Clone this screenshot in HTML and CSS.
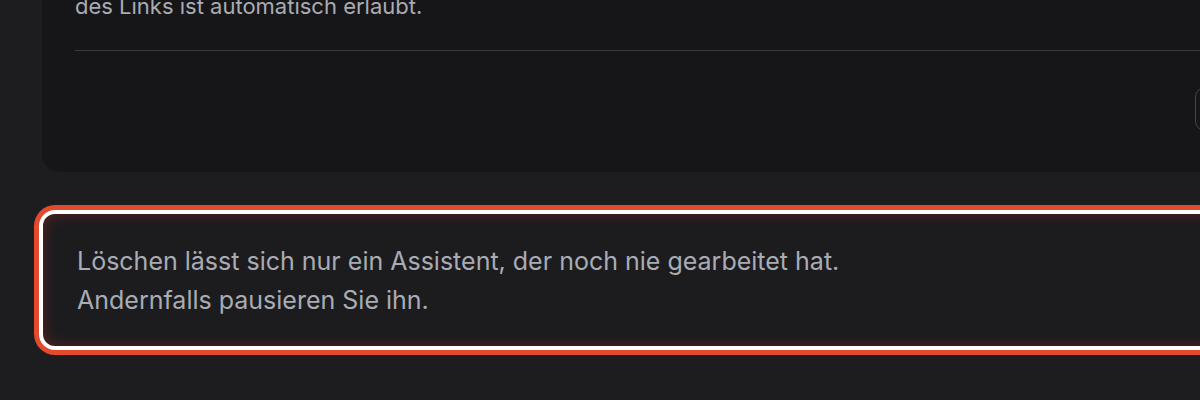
FILE: index.html
```html
<!DOCTYPE html>
<html lang="de">
<head>
<meta charset="utf-8">
<link rel="stylesheet" href="styles.css">
</head>
<body>
<div class="page">
  <section class="card">
    <p class="card-text">des Links ist automatisch erlaubt.</p>
    <hr class="divider">
    <div class="card-footer">
      <button class="btn" type="button" aria-label="Abbrechen"></button>
    </div>
  </section>
  <div class="alert">
    <p class="alert-text">Löschen lässt sich nur ein Assistent, der noch nie gearbeitet hat.<br>Andernfalls pausieren Sie ihn.</p>
  </div>
</div>
</body>
</html>
```
FILE: styles.css
```css
html, body {
  margin: 0;
  padding: 0;
  background: #1d1d20;
  overflow: hidden;
  font-family: Inter, "Noto Sans", sans-serif;
}
.page {
  width: 1400px;
  padding-left: 42px;
  padding-bottom: 60px;
  margin-top: -10px;
  display: flex;
  flex-direction: column;
}
.card {
  width: 1300px;
  box-sizing: border-box;
  background: #161618;
  border-radius: 0 0 18px 18px;
  padding: 0 34px 41px 33px;
}
.card-text {
  margin: 0;
  font-size: 22px;
  line-height: 33px;
  color: #a9acb4;
}
.divider {
  margin: 27px 0 0 0;
  border: 0;
  height: 1px;
  background: #3a3a3e;
}
.card-footer {
  display: flex;
  justify-content: flex-end;
  padding-top: 36px;
}
.btn {
  height: 44px;
  width: 113px;
  box-sizing: border-box;
  border: 1.5px solid #46464a;
  border-radius: 10px;
  background: transparent;
}
.alert {
  margin-top: 42px;
  margin-left: 1px;
  width: 1300px;
  box-sizing: border-box;
  background: #1c1c1f;
  border-radius: 12px;
  padding: 28px 34px 26px 34px;
  box-shadow: 0 0 0 4px #ffffff, 0 0 0 9px #e34a2e, inset 0 0 14px rgba(150, 40, 40, 0.55);
}
.alert-text {
  margin: 0;
  font-size: 25px;
  line-height: 39px;
  color: #a9acb4;
}
```
